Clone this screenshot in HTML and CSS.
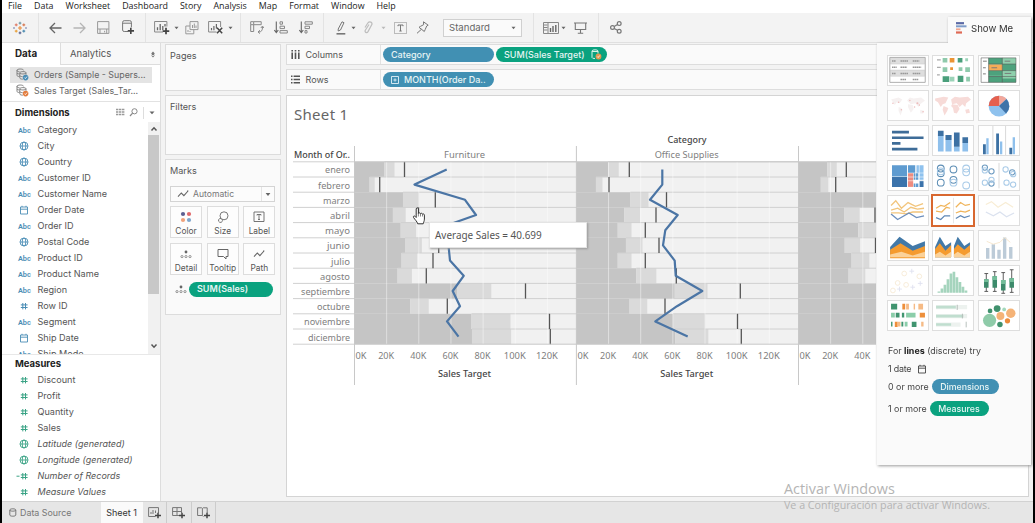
FILE: index.html
```html
<!DOCTYPE html>
<html lang="en">
<head>
<meta charset="utf-8">
<title>Sheet 1</title>
<link rel="stylesheet" href="styles.css">
</head>
<body>
<svg class="defs" width="0" height="0">
  <symbol id="globe" viewBox="0 0 10 10"><g fill="none" stroke="currentColor" stroke-width=".9"><circle cx="5" cy="5" r="4"/><ellipse cx="5" cy="5" rx="1.8" ry="4"/><path d="M1 5h8"/></g></symbol>
  <symbol id="cal" viewBox="0 0 10 10"><path d="M1.5 2h7v7h-7zM1.5 4.2h7M3 .8v1.2M7 .8v1.2" fill="none" stroke="currentColor" stroke-width=".9"/></symbol>
  <symbol id="hash" viewBox="0 0 10 10"><path d="M3.8 2v6.4M6.5 2v6.4M1.8 3.9h6.8M1.8 6.5h6.8" fill="none" stroke="currentColor"/></symbol>
  <symbol id="calchash" viewBox="0 0 14 10"><path d="M7.8 2v6.4M10.5 2v6.4M5.8 3.9h6.8M5.8 6.5h6.8M1.5 5.2h3" fill="none" stroke="currentColor"/></symbol>
  <symbol id="caret" viewBox="0 0 5 4"><path d="M.5.7h4L2.5 3.2z" fill="#666"/></symbol>
  <symbol id="plus" viewBox="0 0 6 6"><path d="M3 0v6M0 3h6" stroke="#444" stroke-width="1.5"/></symbol>
  <symbol id="ds" viewBox="0 0 13 13"><g fill="none" stroke="#777" stroke-width=".9"><path d="M1 2.3v5c0 .8 1 1.2 2.4 1.2M1 2.3C1 .6 7.5.6 7.5 2.3M1 2.3c0 1.3 1.5 1.4 2.5 1.4M1 5c.5.8 1.4.9 2.4.9"/><path d="M3.8 4.8v5c0 1 1.6 1.4 3 1.4M3.8 4.8c0-1.6 6.2-1.6 6.2 0s-6.2 1.5-6.2 0M3.8 7.6c.5.9 1.7 1 2.8 1M10 4.8v2"/></g><circle cx="9.6" cy="9.6" r="2.8" fill="currentColor"/><path d="M8.4 9.6l1 1 1.6-2" fill="none" stroke="#fff" stroke-width=".8"/></symbol>
  <symbol id="dots" viewBox="0 0 12 9"><circle cx="6" cy="2" r="1.4" fill="#666"/><g fill="none" stroke="#888" stroke-width=".9"><circle cx="2" cy="6.6" r="1.1"/><circle cx="6" cy="6.6" r="1.1"/><circle cx="10" cy="6.6" r="1.1"/></g></symbol>
  <symbol id="zig" viewBox="0 0 12 8"><path d="M1 6.6L4.3 3l2.6 2.6L11 1M10 1h1.4" fill="none" stroke="#666" stroke-width="1.1"/></symbol>
</svg>

<div class="app">
  <nav class="menu"><span>File</span><span>Data</span><span>Worksheet</span><span>Dashboard</span><span>Story</span><span>Analysis</span><span>Map</span><span>Format</span><span>Window</span><span>Help</span></nav>

  <div class="toolbar">
    <svg width="14" height="14" viewBox="0 0 14 14"><g stroke-width="1.1"><path d="M7 5v4M5 7h4" stroke="#eb8c3b"/><path d="M7 .8v2.6M5.7 2.1h2.6" stroke="#7099a6"/><path d="M7 10.6v2.6M5.7 11.9h2.6" stroke="#5b6591"/><path d="M3.2 2.5v2.8M1.8 3.9h2.8" stroke="#e07b67"/><path d="M10.8 2.5v2.8M9.4 3.9h2.8" stroke="#d77a55"/><path d="M3.2 8.7v2.8M1.8 10.1h2.8" stroke="#e9a13b"/><path d="M10.8 8.7v2.8M9.4 10.1h2.8" stroke="#4b8bb0"/><path d="M1 6v2M13 6v2" stroke="#7b82ad"/></g></svg>
    <i class="sep"></i>
    <svg width="13" height="12" viewBox="0 0 13 12"><path d="M12.5 6H1M6 1L1 6l5 5" fill="none" stroke="#666" stroke-width="1.3"/></svg>
    <svg width="13" height="12" viewBox="0 0 13 12"><path d="M.5 6H12M7 1l5 5-5 5" fill="none" stroke="#b5b5b5" stroke-width="1.3"/></svg>
    <svg width="13" height="13" viewBox="0 0 13 13"><path d="M.6.6h11.3v11.8H.6zM.6 8h11.3M3 8v4.4M9.7 8v4.4M7.6 9.8v1.6" fill="none" stroke="#999"/></svg>
    <svg width="13" height="15" viewBox="0 0 13 15"><path d="M6 11.5H2.2Q.6 11.5.6 10V2.3Q.6.7 2.2.7h5.6q1.6 0 1.6 1.6v5M.6 3.2h8.8" fill="none" stroke="#777"/><use href="#plus" x="5.5" y="7.5" width="6.6" height="6.6"/></svg>
    <i class="sep"></i>
    <svg width="16" height="15" viewBox="0 0 16 15"><path d="M9 12H.6V1.5h12.3v5" fill="none" stroke="#888"/><path d="M3.5 7.2v3M6.2 4v6.2M8.8 6v4.2M11 4v2.5" stroke="#666" stroke-width="1.3"/><use href="#plus" x="8.5" y="7.5" width="7" height="7"/></svg>
    <svg class="car" width="5" height="4"><use href="#caret"/></svg>
    <svg width="14" height="14" viewBox="0 0 14 14"><path d="M5 .6h8v8H5zM5 5H.8v7.8h8V8.6M7.5 4v3M9.3 2.5V7M11 4.5V7M3 9v2M5 10v1" fill="none" stroke="#999"/></svg>
    <svg width="16" height="15" viewBox="0 0 16 15"><path d="M8.5 12H.6V1.5h12v5.5" fill="none" stroke="#888"/><path d="M3.5 8v2.2M5.9 6v4.2M8.4 4v4.5" stroke="#666" stroke-width="1.2"/><path d="M9 7.8l5.2 5.4M14.2 7.8L9 13.2" stroke="#444" stroke-width="1.5"/></svg>
    <svg class="car" width="5" height="4"><use href="#caret"/></svg>
    <i class="sep"></i>
    <svg width="14" height="13" viewBox="0 0 14 13"><path d="M.7.7h3v3h-3zM3.7.7h7.5v3H3.7M.7 3.7v6.8h3V3.7M8.5 11c3 0 4-1.5 4-5M10.8 7l1.7-2 1.2 2M10 9.2L8 11l2 1.6" fill="none" stroke="#888"/></svg>
    <svg width="14" height="13" viewBox="0 0 14 13"><path d="M2.3.5v10.5M.3 9l2 2.6 2-2.6" fill="none" stroke="#666" stroke-width="1.1"/><path d="M6 .8h2.5v2.4H6zM6 5.2h4.5v2.4H6zM6 9.6h7.3V12H6z" fill="none" stroke="#888"/></svg>
    <svg width="14" height="13" viewBox="0 0 14 13"><path d="M2.3.5v10.5M.3 9l2 2.6 2-2.6" fill="none" stroke="#666" stroke-width="1.1"/><path d="M6 .8h7.3v2.4H6zM6 5.2h4.5v2.4H6zM6 9.6h2V12H6z" fill="none" stroke="#888"/></svg>
    <i class="sep"></i>
    <svg width="10" height="14" viewBox="0 0 10 14"><path d="M2.2 10V8L6 .8l2 .9L4.5 9z" fill="none" stroke="#777"/><path d="M.5 12.8h8.8" stroke="#777" stroke-width="1.6"/></svg>
    <svg class="car" width="5" height="4"><use href="#caret"/></svg>
    <svg width="9" height="13" viewBox="0 0 9 13"><path d="M1 6.5l3-4.7c1.6-2.2 4.9-.3 3.7 2L4 10.6c-1.2 1.8-3.7.6-2.7-1.3L5 3.5" fill="none" stroke="#bdbdbd" stroke-width="1.2"/></svg>
    <svg class="car dim" width="5" height="4"><use href="#caret"/></svg>
    <svg width="13" height="12" viewBox="0 0 13 12"><rect x=".5" y=".5" width="12" height="11" fill="none" stroke="#bbb"/><path d="M4 4.2V3h5v1.2M6.5 3v6M5.3 9h2.4" fill="none" stroke="#777"/></svg>
    <svg width="13" height="13" viewBox="0 0 13 13"><path d="M7.5.8l4.7 3.4-1.5.8-1.5 3.5-.9 2L3 6.3l1.6-1 3-1.6zM5.4 8.3L1 12.3" fill="none" stroke="#777"/></svg>
    <div class="select">Standard<svg width="5" height="4"><use href="#caret"/></svg></div>
    <i class="sep"></i>
    <svg width="16" height="12" viewBox="0 0 16 12"><path d="M.5.5h15v11H.5zM5 .5v11" fill="none" stroke="#888"/><path d="M1 3h3.5M1 5.5h3.5M1 8h3.5" stroke="#888"/><path d="M7.5 6v4M10 4v6M12.8 3v7" stroke="#666" stroke-width="1.4"/></svg>
    <svg class="car" width="5" height="4"><use href="#caret"/></svg>
    <svg width="13" height="12" viewBox="0 0 13 12"><path d="M0 1h13M1.3 1v6.5h10.4V1M6.5 7.5v3.8M3.8 11.3h5.4" fill="none" stroke="#777" stroke-width="1.1"/></svg>
    <i class="sep"></i>
    <svg width="12" height="13" viewBox="0 0 12 13"><g fill="none" stroke="#777" stroke-width="1.2"><circle cx="2.5" cy="6.5" r="1.9"/><circle cx="9.2" cy="2.6" r="1.9"/><circle cx="9.2" cy="10.3" r="1.9"/><path d="M4.2 5.6l3.3-2M4.2 7.5l3.3 1.8"/></g></svg>
  </div>

  <div class="main">
    <aside class="data">
      <div class="tabs"><b>Data</b><span>Analytics<svg width="4" height="7" viewBox="0 0 4 7"><path d="M0 2.8L2 .5l2 2.3zM0 4.2l2 2.3 2-2.3zM.8 2h2.4v3H.8z" fill="#777"/></svg></span></div>
      <ul class="sources">
        <li class="on"><svg class="blue" width="13" height="13"><use href="#ds"/></svg>Orders (Sample - Supers...</li>
        <li><svg class="orange" width="13" height="13"><use href="#ds"/></svg>Sales Target (Sales_Tar...</li>
      </ul>
      <div class="head"><b>Dimensions</b>
        <svg width="40" height="12" viewBox="0 0 40 12"><path d="M0 2.5h8.500M0 5h8.500M0 7.5h8.500" stroke="#999" stroke-width="1.5" stroke-dasharray="2.4 .6"/><circle cx="18.5" cy="4.3" r="2.6" fill="none" stroke="#888"/><path d="M16.6 6.2l-2.6 2.8" stroke="#888" stroke-width="1.2"/><path d="M27.5 0v12" stroke="#ddd"/><path d="M33.500 4.5h5l-2.5 2.8z" fill="#666"/></svg>
      </div>
      <div class="dims">
        <ul class="fields blue">
          <li><i>Abc</i>Category</li>
          <li><svg><use href="#globe"/></svg>City</li>
          <li><svg><use href="#globe"/></svg>Country</li>
          <li><i>Abc</i>Customer ID</li>
          <li><i>Abc</i>Customer Name</li>
          <li><svg><use href="#cal"/></svg>Order Date</li>
          <li><i>Abc</i>Order ID</li>
          <li><svg><use href="#globe"/></svg>Postal Code</li>
          <li><i>Abc</i>Product ID</li>
          <li><i>Abc</i>Product Name</li>
          <li><i>Abc</i>Region</li>
          <li><svg><use href="#hash"/></svg>Row ID</li>
          <li><i>Abc</i>Segment</li>
          <li><svg><use href="#cal"/></svg>Ship Date</li>
          <li><i>Abc</i>Ship Mode</li>
        </ul>
        <div class="scroll"><svg width="8" height="6" viewBox="0 0 8 6"><path d="M1.5 4.5L4 1.8l2.5 2.7" fill="none" stroke="#555" stroke-width="1.5"/></svg><div class="thumb"></div><svg width="8" height="6" viewBox="0 0 8 6"><path d="M1.5 1.5L4 4.2l2.5-2.7" fill="none" stroke="#555" stroke-width="1.5"/></svg></div>
      </div>
      <div class="head measures"><b>Measures</b></div>
      <ul class="fields green">
        <li><svg><use href="#hash"/></svg>Discount</li>
        <li><svg><use href="#hash"/></svg>Profit</li>
        <li><svg><use href="#hash"/></svg>Quantity</li>
        <li><svg><use href="#hash"/></svg>Sales</li>
        <li class="it"><svg><use href="#globe"/></svg>Latitude (generated)</li>
        <li class="it"><svg><use href="#globe"/></svg>Longitude (generated)</li>
        <li class="it"><svg class="wide"><use href="#calchash"/></svg>Number of Records</li>
        <li class="it"><svg><use href="#hash"/></svg>Measure Values</li>
      </ul>
    </aside>

    <section class="cards">
      <div class="card pages">Pages</div>
      <div class="card filters">Filters</div>
      <div class="card marks">Marks
        <div class="marktype"><svg width="12" height="8"><use href="#zig"/></svg><span>Automatic</span><em><svg width="6" height="5"><use href="#caret"/></svg></em></div>
        <div class="buttons">
          <div><svg width="12" height="12" viewBox="0 0 12 12"><circle cx="3" cy="3" r="2.1" fill="#5b5f91"/><circle cx="9" cy="3" r="2.1" fill="#e0696b"/><circle cx="3" cy="9" r="2.1" fill="#f0a27c"/><circle cx="9" cy="9" r="2.1" fill="#7fa6cc"/></svg>Color</div>
          <div><svg width="12" height="12" viewBox="0 0 12 12"><g fill="none" stroke="#777"><circle cx="7" cy="4.8" r="4"/><path d="M4 7.5a2 2 0 1 0 1.2 3c.5-1 .2-1.8-.2-2.3"/></g></svg>Size</div>
          <div><svg width="12" height="12" viewBox="0 0 12 12"><path d="M1 1h10v9.5H1zM4 4.5v-1h4v1M6 3.5V8.5M5 8.5h2" fill="none" stroke="#666" stroke-width=".9"/></svg>Label</div>
          <div><svg width="12" height="12" viewBox="0 -2 12 12"><use href="#dots" width="12" height="9"/></svg>Detail</div>
          <div><svg width="12" height="12" viewBox="0 0 12 12"><path d="M1 1.5h10v7H9v2.5L6.5 8.5H1z" fill="none" stroke="#666"/></svg>Tooltip</div>
          <div><svg width="12" height="12" viewBox="0 -2 12 12"><use href="#zig" width="12" height="8"/></svg>Path</div>
        </div>
        <div class="markpill"><svg width="12" height="9"><use href="#dots"/></svg><span class="pill green-bg">SUM(Sales)</span></div>
      </div>
    </section>

    <section class="work">
      <div class="shelf"><label><svg width="9" height="9" viewBox="0 0 9 9"><path d="M1.2 2.5V9M4.5 2.5V9M7.8 2.5V9M1.2 0v1.5M4.5 0v1.5M7.8 0v1.5" stroke="#555" stroke-width="1.6"/></svg>Columns</label><span class="pill blue-bg">Category</span><span class="pill green-bg target">SUM(Sales Target)<svg width="11" height="11" viewBox="0 0 11 11"><path d="M1 2v6.5q0 1 3 1M1 2q0-1.2 3-1.2t3 1.2v2.5M1 2.5h6" fill="none" stroke="#d9f2e8"/><circle cx="7.5" cy="7.5" r="2.9" fill="#e0964e"/><path d="M6.2 7.5l1 1 1.5-2" stroke="#fff" fill="none" stroke-width=".8"/></svg></span></div>
      <div class="shelf"><label><svg width="9" height="9" viewBox="0 0 9 9"><path d="M2.6 1.2H9M2.6 4.5H9M2.6 7.8H9M0 1.2h1.5M0 4.5h1.5M0 7.8h1.5" stroke="#555" stroke-width="1.5"/></svg>Rows</label><span class="pill blue-bg month"><svg width="8" height="8" viewBox="0 0 8 8"><path d="M.5.5h7v7h-7zM4 2.4v3.2M2.4 4h3.2" fill="none" stroke="#e3f0f7" stroke-width=".9"/></svg>MONTH(Order Da..</span></div>
      <div class="sheet">
        <h1>Sheet 1</h1>
        <svg class="chart" id="chart" width="583" height="260" viewBox="293 130 583 260"></svg>
      </div>
    </section>
  </div>

  <footer class="foot">
    <div class="src"><svg width="8" height="9" viewBox="0 0 8 9"><path d="M.8 2v5c0 1.6 6 1.6 6 0V2c0-1.6-6-1.6-6 0s6 1.5 6 0" fill="none" stroke="#777"/></svg>Data Source</div>
    <div class="cur">Sheet 1</div>
    <div class="ic"><svg width="13" height="12" viewBox="0 0 13 12"><path d="M7.5 9.5H.6V.6h9.9V6M3 7V5M5 7V3M7.5 6V3.5" fill="none" stroke="#777"/><use href="#plus" x="7" y="5.5" width="6" height="6"/></svg></div>
    <div class="ic"><svg width="13" height="12" viewBox="0 0 13 12"><path d="M7 8.5H.6V.6h8.9V6M.6 4.5h9M5 .6v8" fill="none" stroke="#777"/><use href="#plus" x="7" y="5.5" width="6" height="6"/></svg></div>
    <div class="ic"><svg width="13" height="12" viewBox="0 0 13 12"><path d="M6.5 9.5L5.3 8.5H.6V.8h4l.8.7.8-.7h4V6M5.4 1.5v7" fill="none" stroke="#777"/><use href="#plus" x="7" y="5.5" width="6" height="6"/></svg></div>
  </footer>

  <div class="tooltip">Average Sales = 40.699</div>
  <svg class="cursor" width="14" height="18" viewBox="0 0 14 18"><path d="M4.2 10.5V2c0-1.6 2.2-1.6 2.2 0v4.5c.4-1 2-.8 2.1.3.5-.9 2-.6 2 .5.6-.7 1.900-.3 1.900.8v4c0 2.3-1 3-1.2 4.700H5.700C5.500 15 3 12.700 1.600 10.600c-.8-1.200.6-2.200 1.600-1.200z" fill="#fff" stroke="#333"/><path d="M6.4 6v3.5M8.5 7v2.5M10.5 7.5v2" stroke="#555" stroke-width=".7"/></svg>

  <div class="showme">
    <div class="smtab"><svg width="11" height="12" viewBox="0 0 11 12"><path d="M0 1.2h8" stroke="#5b6aa5" stroke-width="2.2"/><path d="M0 4.3h10.5" stroke="#7f9cc9" stroke-width="2"/><path d="M0 7.3h4.5" stroke="#f0a58e" stroke-width="1.8"/><path d="M0 10.5h6" stroke="#df6a55" stroke-width="2.2"/></svg>Show Me</div>
    <div class="smbody">
      <div class="thumbs">
        <svg viewBox="0 0 42 31"><path d="M2 2h37v6.5H2zM2 15h37v6.5H2z" fill="#dedede"/><path d="M1.7 1.5h37.6v26.5H1.7z" fill="none" stroke="#aaa"/><path d="M2 8.5h37M2 15h37M2 21.5h37" stroke="#ccc" stroke-width=".6"/><path d="M4 5.2h4M13 5.2h8M26 5.2h7M4 12h5M13 12h7M26 12h9M4 18.5h4M13 18.5h8M26 18.5h8M13 25h6M26 25h6" stroke="#999" stroke-width="1.6" stroke-dasharray="1.7 .4"/></svg>
        <svg viewBox="0 0 42 31"><path d="M4 4h4M4 12h4M4 20h3" stroke="#aaa" stroke-width="1.3"/><path d="M10 2h5v5h-5zM10 12h5v5h-5zM27 12h4v4h-4zM34 12h5v5h-5zM35 22h4v5h-4z" fill="#8fcaac"/><path d="M26 2h5v5h-5zM10 21.5h7v6h-7zM26 21h6v6.5h-6z" fill="#4a9f7b"/><path d="M17.5 22h5v5h-5zM34 2.5h3v3h-3z" fill="#9bd3b8"/><path d="M17.5 2h5v5h-5zM18 12h3v3h-3z" fill="#eb9434"/></svg>
        <svg viewBox="0 0 42 31"><path d="M10 2h29v26H10z" fill="#8fd0ad"/><path d="M10 2h14.5v6.5H10zM24.5 8.5H39v7H24.5zM10 21.5h14.5V28H10zM10 16h14.5v5H10zM24.5 24H39v4H24.5z" fill="#4da27d"/><path d="M10 9h14.5v6.5H10z" fill="#f5ac58"/><path d="M2 2h37v26H2zM10 2v26M24.5 2v26M10 8.5h29M10 15.5h29M10 21.8h29" fill="none" stroke="#555" stroke-width=".6"/><path d="M4 5.5h4M4 12.5h3M4 19h3M13 12.5h6M27 5.5h6M27 18.5h7" stroke="#777"/></svg>
        <svg viewBox="0 0 42 31"><path d="M3 9l8-2 4 2-3 4-3-1-2 3zM11 17l3 1 1 3-2 5-2-5zM20 10l3-3 4 1 8-1 4 3-5 4-2 3-3-4-5 1zM21 14l5 1 1 4-3 4-3-6zM34 20l4 1-1 3h-3z" fill="#f6f1f1"/><g fill="#eebcbc"><circle cx="5" cy="13" r=".8"/><circle cx="11" cy="12" r=".8"/><circle cx="14" cy="20" r=".8"/><circle cx="23" cy="10" r=".8"/><circle cx="31" cy="13" r="1.1"/><circle cx="33" cy="15" r=".8"/><circle cx="37" cy="22" r=".8"/><circle cx="28" cy="17" r=".8"/></g></svg>
        <svg viewBox="0 0 42 31"><path d="M2 8l9-2 5 1-3 6-3 1-2 3-3-5-3-2zM11 16l5 2-1 3-3 5-2-6zM19 9l4-3 5 1 9-1 3 3-5 4-1 4-3-3-3 3-3-4-5 1zM20 14l6 1 2 4-3 5-3-1-1-5-2-2zM34 20l4-1 1 4-4 1z" fill="#f7dbd8"/></svg>
        <svg viewBox="0 0 42 31"><circle cx="21" cy="16" r="11" fill="#8fc2ee"/><path d="M21 16V5a11 11 0 0 1 8 3.5z" fill="#f2a79b"/><path d="M21 16H10A11 11 0 0 1 21 5z" fill="#e5604e"/><path d="M21 16l8-7.5a11 11 0 0 1-.5 15.5z" fill="#3f73a8"/></svg>
        <svg viewBox="0 0 42 31"><path d="M4 6.5h18M4 12.5h33.5M4 18.5h9M4 24.5h27" stroke="#3e6c98" stroke-width="2.8"/></svg>
        <svg viewBox="0 0 42 31"><path d="M5 10h6v17H5zM13 15h6.5v12H13zM22 22h6v5h-6zM31 18h6v9h-6z" fill="#8fc0ec"/><path d="M5 5h6v5.5H5zM13 9.5h6.5V15H13zM22 7h6v15h-6zM31 12h6v6h-6z" fill="#3d71a3"/></svg>
        <svg viewBox="0 0 42 31"><path d="M14.5 0v31M28 0v31" stroke="#ccc" stroke-width=".8"/><path d="M7.5 13H10v17H7.5zM22 16.5h2.5V30H22zM35.5 12H38v18h-2.5z" fill="#8fc0ec"/><path d="M4 19.5h3V30H4zM18 8h3v22h-3zM32 23h3v7h-3z" fill="#3d71a3"/></svg>
        <svg viewBox="0 0 42 31"><path d="M4 4.5h16v12H4zM21 4.5h8v8h-8zM27 13h5v7h-5zM27 24h5v3.5h-5z" fill="#5e9bd0"/><path d="M4 17h16v10.5H4zM33 21h4.5v6.5H33z" fill="#3b73ab"/><path d="M30 4.5h7.5v8H30zM33 13h4.5v7H33z" fill="#8fc2ee"/><path d="M21 13h5.5v14.5H21z" fill="#ee8c7f"/><path d="M29 4v23.5M33 4v23.5M21 21h17M21 17h17" stroke="#fff" stroke-width=".6"/></svg>
        <svg viewBox="0 0 42 31"><g fill="none" stroke="#5d8eb5" stroke-width="1.1"><circle cx="8" cy="8" r="3.6"/><circle cx="8" cy="13" r="3.6"/><circle cx="8" cy="23" r="3.6"/><circle cx="21.5" cy="9" r="3.6"/><circle cx="21.5" cy="20" r="3.6"/><g stroke="#a9cbe8"><circle cx="8" cy="11" r="3.6"/><circle cx="21.5" cy="23" r="3.6"/><circle cx="35" cy="8" r="3.6"/><circle cx="35" cy="12" r="3.6"/><circle cx="35" cy="26" r="3.6"/></g></g></svg>
        <svg viewBox="0 0 42 31"><path d="M21 2v27" stroke="#ccc" stroke-width=".8"/><g fill="none" stroke="#6c9ac0" stroke-width="1.1"><circle cx="6" cy="7" r="2.8"/><circle cx="13" cy="11" r="2.8"/><circle cx="13" cy="24" r="2.8"/><circle cx="35" cy="12" r="2.8"/><g stroke="#a9cbe8"><circle cx="6" cy="10" r="2.8"/><circle cx="6" cy="23" r="2.8"/><circle cx="13" cy="20" r="2.8"/><circle cx="28" cy="9" r="2.8"/><circle cx="29" cy="23" r="2.8"/><circle cx="36" cy="14" r="2.8"/><circle cx="36" cy="25" r="2.8"/></g></g></svg>
        <svg viewBox="0 0 42 31"><g fill="none" stroke-width="1.4"><path d="M3 10l5-5 6 8 7-6 8 4 8-3M3 15l7-2 7 4 7-5 7 2 7-1M3 18l8 0 8 1 7-2 11 0" stroke="#f2c57c"/><path d="M3 19l7 6 12-7 8 5 8-2" stroke="#6d8fbd"/></g></svg>
        <svg class="picked" viewBox="0 0 42 31"><path d="M21.5 2v27" stroke="#ddd" stroke-width=".8"/><g fill="none" stroke-width="1.3"><path d="M3 13l5-3 4 1 6-4M3 16l6 1 5-5 4 1M24 12l5-5 5 3 5-1M24 18l5-2 5 1 5-2" stroke="#f0b55c"/><path d="M3 23l5 2 4-4 6 0M24 24l5-3 4 2 6-2" stroke="#5f87b5"/></g></svg>
        <svg viewBox="0 0 42 31"><g fill="none" stroke-width="1.3"><path d="M7 9l6-3 7 6 8-5 8 5" stroke="#f8edd5"/><path d="M7 17l8 4 7-4 7 5 8-4" stroke="#dbe2ef"/></g></svg>
        <svg viewBox="0 0 42 31"><path d="M2 17l10-11 14 10 13-5v17H2z" fill="#4279a8"/><path d="M2 20l11-7 13 8 13-5v13H2z" fill="#f59b2f"/><path d="M2 25l12-3 12 4 13-4v6H2z" fill="#fbd29a"/></svg>
        <svg viewBox="0 0 42 31"><path d="M2 17l5-11 6 10 6-4v16H2zM22 16l4-10 7 10 6-4v16H22z" fill="#4279a8"/><path d="M2 19l5-6 6 8 6-6v13H2zM22 19l4-5 7 6 6-5v13H22z" fill="#f59b2f"/><path d="M2 25l5-3 6 4 6-4v6H2zM22 25l4-3 7 4 6-4v6H22z" fill="#fbd29a"/></svg>
        <svg viewBox="0 0 42 31"><path d="M9 18v11.5M15 14v15.5M21 20v9.5M27 7v22.5M33.5 17v12.5" stroke="#bccbd8" stroke-width="3.6"/><path d="M8 11l7 3 7-2 5-5 6 5" fill="none" stroke="#f7e7ce"/></svg>
        <svg viewBox="0 0 42 31"><g fill="none" stroke="#f7ebd7"><circle cx="10" cy="18" r="2.5"/><circle cx="17" cy="8" r="2.5"/><circle cx="19" cy="20" r="2.5"/><circle cx="5" cy="26" r="2.5"/><circle cx="33" cy="11" r="2.5"/></g><path d="M12 22v5M9.5 24.5h5M25 3v5M22.5 5.5h5M26 20v5M23.5 22.5h5M34 16v5M31.5 18.5h5" stroke="#e0e2f0"/></svg>
        <svg viewBox="0 0 42 31"><path d="M6 27v1.5M9.2 24v4.5M12.4 20v8.5M15.6 14v14.5M18.8 8v20.5M22 6v22.5M25.2 12v16.5M28.4 17v11.5M31.6 22v6.5M34.8 26v2.5" stroke="#a5d4bd" stroke-width="2.8"/></svg>
        <svg viewBox="0 0 42 31"><path d="M7.5 8v19M16.5 6v21M25.5 7v22M34.5 4v24M5.5 8h4M5.5 27h4M14.5 6h4M14.5 27h4M23.5 7h4M23.5 29h4M32.5 4h4M32.5 28h4" stroke="#555"/><path d="M7.5 14v9M16.5 11v12M25.5 15v11M34.5 13v10" stroke="#3d8a6b" stroke-width="4.8"/><path d="M7.5 14v3M16.5 11v4M25.5 15v4M34.5 13v4" stroke="#73bd99" stroke-width="4.8"/></svg>
        <svg viewBox="0 0 42 31"><path d="M3 3h6.5v6H3zM8 12.5h4v5H8zM14.5 12.5h2.5v5h-2.5zM14 22h2v5h-2zM25 22h5v5.5h-5zM3 22h1.5v5H3z" fill="#419570"/><path d="M3 12.5h4v5H3zM19 12.5h10v5H19zM17.5 22h3v5h-3z" fill="#8bceaa"/><path d="M15 3h3v6h-3zM33.5 12.5h5.5v5h-5.5zM7 22h3v5.5H7z" fill="#ed8f3b"/><path d="M19 3h3v6h-3zM27 3h1.5v6H27zM32 3h5v6h-5zM10 22h3v5h-3zM35 22h2.5v5H35z" fill="#f6bb86"/></svg>
        <svg viewBox="0 0 42 31"><path d="M3 6.5h33M3 16h33M3 25h26" stroke="#edf2ef" stroke-width="4.5"/><path d="M3 6.5h21M3 16h29M3 25h16" stroke="#c0decf" stroke-width="2.8"/><path d="M25.5 4v5.5M31 13.5v5M35 22v6" stroke="#b5bdb9"/></svg>
        <svg viewBox="0 0 42 31"><circle cx="11" cy="20.5" r="7" fill="#8fcba9"/><g fill="#40916d"><circle cx="11.5" cy="10.5" r="2.5"/><circle cx="19" cy="8" r="3.6"/><circle cx="22" cy="25" r="2.9"/></g><circle cx="26.5" cy="9" r="2" fill="#a3d8bc"/><g fill="#f5b377"><circle cx="22.5" cy="16" r="4.2"/><circle cx="33.5" cy="13" r="5"/></g><circle cx="30" cy="21" r="2.8" fill="#ec8a3b"/></svg>
      </div>
      <p class="p1"><span>For <b>lines</b> (discrete) try</span></p>
      <p class="p2">1 date <svg width="10" height="10"><use href="#cal"/></svg></p>
      <p class="p3">0 or more <span class="pill blue-bg">Dimensions</span></p>
      <p class="p4">1 or more <span class="pill green-bg">Measures</span></p>
    </div>
  </div>

  <div class="watermark"><div>Activar Windows</div><span>Ve a Configuración para activar Windows.</span></div>
</div>
<script src="chart.js"></script>
</body>
</html>
```
FILE: chart.js
```js
// Bullet chart: average target marks with 60% / 80% bands and a sales line per pane.
const TOP = 161.8, ROW = 15.2, BOTTOM = TOP + ROW * 12, STEP = 32.15, RIGHT = 876;
const months = ['enero', 'febrero', 'marzo', 'abril', 'mayo', 'junio', 'julio', 'agosto',
  'septiembre', 'octubre', 'noviembre', 'diciembre'];
const widths = [25, 32, 27, 20, 25, 23, 19, 30, 49, 33, 46, 42];
const panes = [
  { x: 354.5, end: 576.4, name: 'Furniture', mid: 464.5, nameW: 41,
    marks: [404.5, 379.7, 435.3, 418.5, 431.5, 438.7, 433, 426.3, 525.5, 447.3, 549.5, 550.3],
    line: [446.7, 414.5, 465, 476, 433, 448.5, 450, 463.7, 452.7, 460, 447, 458.5] },
  { x: 576.4, end: 798.5, name: 'Office Supplies', mid: 686.7, nameW: 64,
    marks: [629.3, 609, 666.5, 656, 645.3, 659, 645.3, 676.3, 740.3, 665, 737.5, 741.3],
    line: [662.3, 662.3, 650, 677.7, 665.3, 663, 674.7, 675.7, 702.3, 677, 655.3, 687.7] },
  { x: 798.5, end: 1020, marks: [846.3, 835.7, 930, 875, 898, 875.5, 887, 882, 990, 940, 990, 990] }
];
let out = '';
const rect = (x1, x2, y, h, c) => {
  if (x2 > x1) out += `<rect x="${x1}" y="${y}" width="${x2 - x1}" height="${h}" class="${c}"/>`;
};
const text = (x, y, s, w, anchor, cls) => {
  out += `<text x="${x}" y="${y}" textLength="${w}" lengthAdjust="spacingAndGlyphs" text-anchor="${anchor}" class="${cls}">${s}</text>`;
};
const line = (x1, y1, x2, y2, c) => { out += `<path d="M${x1} ${y1}L${x2} ${y2}" class="${c}"/>`; };

for (const p of panes) {
  const stop = Math.min(p.end, RIGHT);
  rect(p.x, stop, TOP, ROW * 12, 'light');
  p.marks.forEach((m, i) => {
    const y = TOP + i * ROW, len = m - p.x;
    const a = Math.min(RIGHT, p.x + len * 0.6);
    rect(p.x, a, y, ROW, 'dark');
    rect(a, Math.min(RIGHT, p.x + len * 0.8), y, ROW, 'midband');
    line(a, y, stop, y, 'rowline');
  });
  for (let k = 1; k < 7; k++) {
    const x = p.x + k * STEP;
    if (x < RIGHT) line(x, TOP, x, BOTTOM, 'grid');
  }
  p.marks.forEach((m, i) => { if (m < RIGHT) line(m, TOP + i * ROW, m, TOP + (i + 1) * ROW, 'mark'); });
}
for (let i = 0; i <= 12; i++) line(293, TOP + i * ROW, 354.5, TOP + i * ROW, 'rowline');
line(354, TOP, RIGHT, TOP, 'frame');
line(354, BOTTOM, RIGHT, BOTTOM, 'frame');
for (const p of panes) {
  line(p.x, 146, p.x, 385, 'frame');
  if (p.line) {
    out += `<polyline class="sales" points="${p.line.map((x, i) => x + ',' + (TOP + ROW * (i + 0.5))).join(' ')}"/>`;
    text(p.mid, 158, p.name, p.nameW, 'middle', 'lab');
    text(p.mid, 377.2, 'Sales Target', 53, 'middle', 'title');
  }
  for (let k = 0; k < 7; k++) {
    const x = p.x + k * STEP;
    if (x > RIGHT) break;
    const w = k === 0 ? 11 : k < 5 ? 16 : 22;
    text(k === 0 ? x + 6.5 : x - 0.5, 359, k * 20 + 'K', w, 'middle', 'lab');
  }
}
months.forEach((m, i) => text(350, TOP + ROW * (i + 0.5) + 3.9, m, widths[i], 'end', 'lab'));
text(294, 157.8, 'Month of Or..', 56, 'start', 'title');
text(687, 143, 'Category', 39, 'middle', 'title');
document.getElementById('chart').innerHTML = out;
```
FILE: styles.css
```css
* { box-sizing: border-box; }
body { margin: 0; background: #000; font-family: Inter, "Open Sans", sans-serif; font-size: 9.3px; color: #555; }
ul, p, h1 { margin: 0; padding: 0; list-style: none; font-weight: normal; }
.defs { position: absolute; }
.app { position: relative; width: 1035px; height: 523px; overflow: hidden; background: #f3f3f3; border: solid #000; border-width: 0 2px; display: flex; flex-direction: column; }
.blue { color: #4a8db5; }
.green { color: #3aa385; }
.orange { color: #e27d3f; }
.blue-bg { background: #4190b3; }
.green-bg { background: #0aa27f; }
.pill { display: flex; align-items: center; height: 15px; border-radius: 8px; padding-left: 8px; color: #e6f4f4; font-size: 9px; font-weight: 500; white-space: nowrap; }

.menu { height: 13px; flex: none; background: #fff; display: flex; gap: 12px; padding-left: 6px; font: 500 8.9px/12px "Open Sans", sans-serif; color: #222; }

.toolbar { height: 30px; flex: none; display: grid; align-items: center; padding-left: 11px; border-bottom: 1px solid #e0e0e0;
  grid-template-columns: 25px 11px 24px 24px 25px 23px 9px 20px 11px 23px 20px 12px 10px 24px 25px 24px 13px 15px 13px 17px 13px 22px 27px 90px 10px 18px 13px 24px 12px 20px; }
.sep { width: 1px; height: 29px; background: #e3e3e3; }
.dim { opacity: .4; }
.select { width: 79px; height: 18px; border: 1px solid #d0d0d0; background: #fafafa; display: flex; align-items: center; justify-content: space-between; padding: 0 5px; font-size: 9.6px; color: #666; }

.main { flex: 1; min-height: 0; display: grid; grid-template-columns: 158.5px 124.5px 1fr; }
.data { background: #fff; border-right: 1px solid #ddd; min-width: 0; min-height: 0; display: flex; flex-direction: column; overflow: hidden; }
.tabs { display: grid; grid-template-columns: 58px 1fr; height: 20px; flex: none; line-height: 20px; }
.tabs b { padding: 1px 0 0 13px; font-size: 9.8px; color: #222; font-weight: 700; }
.tabs span { background: #f8f8f8; border: solid #ddd; border-width: 0 0 1px 1px; padding: 1px 5px 0 9px; display: flex; justify-content: space-between; align-items: center; font-size: 9.5px; }
.sources { padding-top: 4px; height: 39px; flex: none; border-bottom: 1px solid #e2e2e2; }
.sources li { height: 15.5px; margin: 0 8px; padding-left: 6px; display: flex; align-items: center; gap: 5px; white-space: nowrap; color: #666; font-size: 8.85px; }
.sources .on { background: #e4e4e4; }
.head { height: 20px; flex: none; display: flex; align-items: center; justify-content: space-between; padding: 1px 4px 0 13px; color: #222; font-size: 9.5px; }
.dims { height: 232.5px; flex: none; overflow: hidden; display: flex; justify-content: space-between; border-bottom: 1px solid #e8e8e8; }
.fields { font-size: 9.1px; }
.fields li { height: 15.98px; display: grid; grid-template-columns: 21.5px auto; align-items: center; margin-left: 14px; line-height: 15.98px; white-space: nowrap; color: #555; }
.fields i { font: 600 7.3px/15px Roboto, sans-serif; color: #4a8db5; padding-left: 2px; padding-top: 1px; }
.fields svg { width: 10px; height: 10px; margin-left: 2.5px; color: #4a8db5; }
.fields.green svg { color: #3aa385; }
.fields svg.wide { width: 14px; margin-left: -1px; }
.fields .it { font-style: italic; font-size: 9px; }
.scroll { width: 12px; background: #f1f1f1; display: flex; flex-direction: column; align-items: center; padding-top: 4px; }
.thumb { width: 11px; height: 159px; background: #c8c8c8; margin: 3px 0 49px; }
.measures { height: 17.5px; padding-top: 0; }

.cards { padding: 1px 4px 0 4.5px; display: flex; flex-direction: column; gap: 4.5px; }
.card { border: 1px solid #dcdcdc; background: #fafafa; padding: 5px 5px 0 4px; line-height: 12px; font-size: 9.1px; }
.pages { height: 46.5px; }
.filters { height: 59.5px; }
.marks { height: 156px; }
.marktype { margin-top: 9px; height: 16px; border: 1px solid #d4d4d4; display: flex; align-items: center; gap: 4px; padding-left: 6px; background: #fcfcfc; font-size: 8.6px; color: #777; }
.marktype em { margin-left: auto; width: 13px; height: 14px; border-left: 1px solid #e4e4e4; display: flex; align-items: center; justify-content: center; }
.buttons { display: grid; grid-template-columns: repeat(3, 32px); column-gap: 4.7px; row-gap: 4.5px; margin-top: 4px; }
.buttons div { height: 32px; border: 1px solid #ddd; background: #fdfdfd; display: flex; flex-direction: column; align-items: center; justify-content: flex-end; gap: 2px; font-size: 8.4px; line-height: 12px; }
.markpill { display: flex; align-items: center; gap: 2.5px; margin: 7px 0 0 4.5px; }
.markpill .pill { width: 84px; font-weight: 600; }

.work { min-width: 0; padding: 1px 4px 0 1px; display: flex; flex-direction: column; gap: 4.5px; }
.shelf { height: 20.8px; flex: none; border: 1px solid #ddd; background: #fafafa; display: flex; align-items: center; gap: 2px; }
.shelf label { width: 94px; height: 100%; border-right: 1px solid #e2e2e2; display: flex; align-items: center; gap: 5.5px; padding-left: 4px; font-size: 9px; }
.shelf .pill { width: 111px; }
.shelf .target { gap: 6px; }
.shelf .month { gap: 5px; }
.sheet { height: 402px; flex: none; background: #fff; border: 1px solid #d4d4d4; padding: 10px 0 0 6px; }
.sheet h1 { font: 15px/17px "Noto Sans", sans-serif; color: #666; margin-left: 1px; height: 24.5px; letter-spacing: .3px; }
.chart { display: block; font-family: "Noto Sans", sans-serif; font-size: 9.3px; }
.light { fill: #f1f1f1; }
.dark { fill: #c5c5c5; }
.midband { fill: #dadada; }
.rowline { stroke: #d0d0d0; fill: none; }
.frame { stroke: #c8c8c8; fill: none; }
.grid { stroke: #fff; stroke-opacity: .45; fill: none; }
.mark { stroke: #555; stroke-width: 1.3; }
.sales { fill: none; stroke: #4b75a5; stroke-width: 2.2; stroke-linejoin: round; }
.lab { fill: #808080; }
.title { fill: #444; font-weight: 500; }

.foot { height: 22px; flex: none; background: #e6e6e6; border-top: 1px solid #d2d2d2; display: flex; line-height: 21px; font-size: 9px; }
.src { width: 98.5px; padding-left: 7px; display: flex; align-items: center; gap: 3px; color: #777; font-size: 8.9px; }
.cur { width: 42px; background: #fafafa; text-align: center; color: #333; }
.ic { width: 24.5px; border-right: 1px solid #ccc; display: flex; align-items: center; justify-content: center; }

.tooltip { position: absolute; left: 427px; top: 222px; width: 158px; height: 26px; background: #fff; border: 1px solid #e4e4e4; box-shadow: 1px 1px 2px #999; padding-left: 5px; font: 9.95px/25px "Noto Sans", sans-serif; color: #555; white-space: nowrap; }
.cursor { position: absolute; left: 410px; top: 207px; }

.showme { position: absolute; left: 875px; top: 17px; width: 154px; height: 448px; filter: drop-shadow(1px 1px 1.5px #999); display: flex; flex-direction: column; align-items: flex-end; }
.smtab { width: 83px; height: 26px; background: #fafafa; display: flex; align-items: center; gap: 4.5px; padding: 0 0 4px 7.5px; font-size: 9.6px; color: #333; }
.smbody { width: 154px; flex: 1; background: #fafafa; padding: 12px 0 0 10px; color: #444; }
.thumbs { display: grid; grid-template-columns: repeat(3, 42px); column-gap: 3.3px; row-gap: 3.8px; }
.thumbs svg { width: 42px; height: 31.2px; background: #fff; border: 1px solid #dedede; display: block; }
.thumbs .picked { border: 1.5px solid #d8672f; outline: .5px solid #d8672f; }
.smbody p { height: 18px; display: flex; align-items: center; padding-left: 1px; gap: 1px; font-size: 8.9px; white-space: pre; }
.smbody b { color: #222; }
.smbody .p1 { margin-top: 10.5px; }
.smbody .p2 { letter-spacing: -.2px; }
.smbody .p2 svg { margin-left: 2px; }
.smbody .p4 { margin-top: 4px; }
.smbody .pill { font-weight: 500; font-size: 8.8px; width: 67px; }
.smbody .p4 .pill { width: 59px; }

.watermark { position: absolute; left: 782px; top: 480px; color: #b4b4b4; font-family: "Open Sans", sans-serif; white-space: nowrap; }
.watermark div { font-size: 14.4px; line-height: 17px; }
.watermark span { display: block; font-size: 10.7px; line-height: 17px; }
```
